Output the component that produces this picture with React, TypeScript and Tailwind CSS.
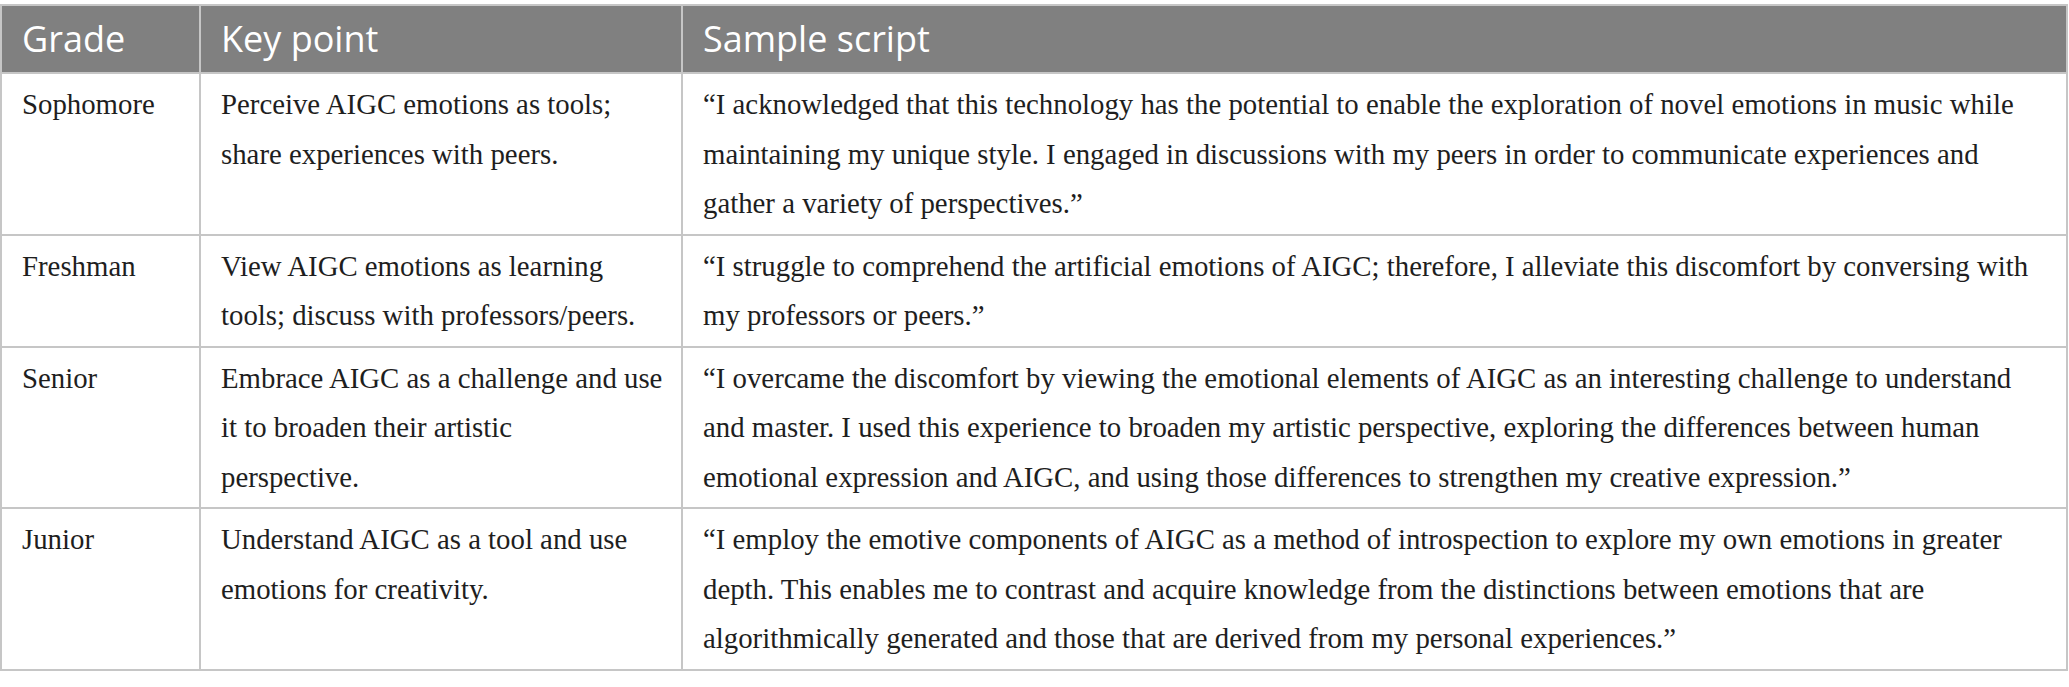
const rows: { grade: string; key: string[]; script: string[] }[] = [
  {
    grade: 'Sophomore',
    key: ['Perceive AIGC emotions as tools;', 'share experiences with peers.'],
    script: [
      '“I acknowledged that this technology has the potential to enable the exploration of novel emotions in music while',
      'maintaining my unique style. I engaged in discussions with my peers in order to communicate experiences and',
      'gather a variety of perspectives.”',
    ],
  },
  {
    grade: 'Freshman',
    key: ['View AIGC emotions as learning', 'tools; discuss with professors/peers.'],
    script: [
      '“I struggle to comprehend the artificial emotions of AIGC; therefore, I alleviate this discomfort by conversing with',
      'my professors or peers.”',
    ],
  },
  {
    grade: 'Senior',
    key: ['Embrace AIGC as a challenge and use', 'it to broaden their artistic', 'perspective.'],
    script: [
      '“I overcame the discomfort by viewing the emotional elements of AIGC as an interesting challenge to understand',
      'and master. I used this experience to broaden my artistic perspective, exploring the differences between human',
      'emotional expression and AIGC, and using those differences to strengthen my creative expression.”',
    ],
  },
  {
    grade: 'Junior',
    key: ['Understand AIGC as a tool and use', 'emotions for creativity.'],
    script: [
      '“I employ the emotive components of AIGC as a method of introspection to explore my own emotions in greater',
      'depth. This enables me to contrast and acquire knowledge from the distinctions between emotions that are',
      'algorithmically generated and those that are derived from my personal experiences.”',
    ],
  },
];

function Lines({ lines }: { lines: string[] }) {
  return (
    <>
      {lines.map((l, i) => (
        <span key={i} className="block">
          {l}
        </span>
      ))}
    </>
  );
}

export default function App() {
  return (
    <div className="bg-white w-[2069px] h-[687px] pt-[4px]">
      <table className="w-[2068px] table-fixed border-2 border-[#c6c6c6]">
        <colgroup>
          <col className="w-[199px]" />
          <col className="w-[482px]" />
          <col />
        </colgroup>
        {/* Header */}
        <thead>
          <tr className="bg-[#808080] text-white h-[68px]">
            {['Grade', 'Key point', 'Sample script'].map(h => (
              <th
                key={h}
                className="border-2 border-[#c6c6c6] border-t-0 px-[20px] text-left font-normal text-[36px] leading-[66px] font-['Open_Sans',sans-serif]"
              >
                {h}
              </th>
            ))}
          </tr>
        </thead>
        {/* Body rows */}
        <tbody className="text-[#1e1e1e] text-[28.8px] leading-[49.5px] font-['Liberation_Serif',serif]">
          {rows.map(r => (
            <tr key={r.grade}>
              <td className="border-2 border-[#c6c6c6] px-[20px] pt-[6px] pb-[5px] align-top whitespace-nowrap">{r.grade}</td>
              <td className="border-2 border-[#c6c6c6] px-[20px] pt-[6px] pb-[5px] align-top whitespace-nowrap">
                <Lines lines={r.key} />
              </td>
              <td className="border-2 border-[#c6c6c6] px-[20px] pt-[6px] pb-[5px] align-top whitespace-nowrap">
                <Lines lines={r.script} />
              </td>
            </tr>
          ))}
        </tbody>
      </table>
    </div>
  );
}
